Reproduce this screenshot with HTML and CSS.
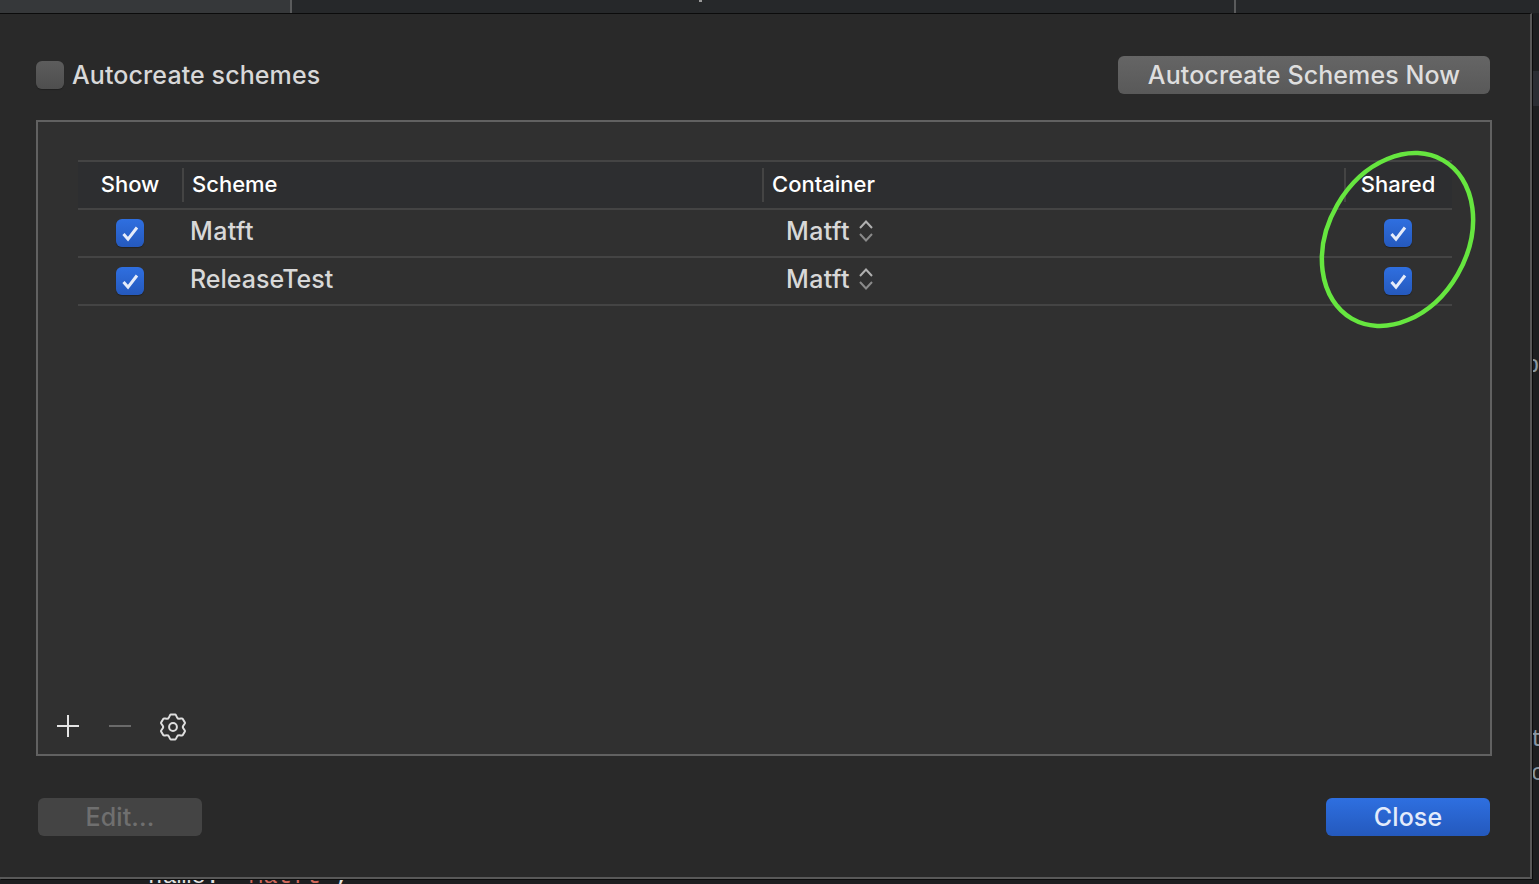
FILE: index.html
```html
<!DOCTYPE html>
<html lang="en">
<head>
<meta charset="utf-8">
<title>Manage Schemes</title>
<link rel="stylesheet" href="styles.css">
</head>
<body>
<div class="backdrop">
  <div class="tabs">
    <div class="tab tab-first"></div>
    <div class="tab tab-mid"><span class="tab-dot"></span></div>
    <div class="tab tab-last"></div>
  </div>
  <div class="side-strip"></div>
  <span class="edge-glyph edge-p">p</span>
  <span class="edge-glyph edge-t">t</span>
  <span class="edge-glyph edge-c">c</span>
  <div class="code-peek">name: <span class="code-str">"Matft"</span>,</div>
  <main class="sheet">
    <header class="top-row">
      <label class="auto-check"><span class="check check-off"></span><span>Autocreate schemes</span></label>
      <button class="btn btn-gray">Autocreate Schemes Now</button>
    </header>
    <section class="panel">
      <div class="table">
        <div class="row row-head">
          <div class="cell c-show">Show</div>
          <div class="cell c-scheme"><span class="sep"></span>Scheme</div>
          <div class="cell c-container"><span class="sep"></span>Container</div>
          <div class="cell c-shared"><span class="sep"></span>Shared</div>
        </div>
        <div class="row">
          <div class="cell c-show"><span class="check check-on"><svg viewBox="0 0 28 28" class="tick"><path d="M7.5 15l4.5 5.2L21 8.5"/></svg></span></div>
          <div class="cell c-scheme body-text wide">Matft</div>
          <div class="cell c-container body-text pop wide">Matft<svg class="updown" viewBox="0 0 16 24"><path d="M2 9l6-6.5 6 6.5"/><path class="down" d="M2 15l6 6.5 6-6.5"/></svg></div>
          <div class="cell c-shared"><span class="check check-on"><svg viewBox="0 0 28 28" class="tick"><path d="M7.5 15l4.5 5.2L21 8.5"/></svg></span></div>
        </div>
        <div class="row">
          <div class="cell c-show"><span class="check check-on"><svg viewBox="0 0 28 28" class="tick"><path d="M7.5 15l4.5 5.2L21 8.5"/></svg></span></div>
          <div class="cell c-scheme body-text">ReleaseTest</div>
          <div class="cell c-container body-text pop wide">Matft<svg class="updown" viewBox="0 0 16 24"><path d="M2 9l6-6.5 6 6.5"/><path class="down" d="M2 15l6 6.5 6-6.5"/></svg></div>
          <div class="cell c-shared"><span class="check check-on"><svg viewBox="0 0 28 28" class="tick"><path d="M7.5 15l4.5 5.2L21 8.5"/></svg></span></div>
        </div>
      </div>
      <div class="toolbar">
        <svg class="tool" viewBox="0 0 24 24"><path class="plus" d="M12 1v22M1 12h22"/></svg>
        <svg class="tool" viewBox="0 0 24 24"><path class="minus" d="M1 12h22"/></svg>
        <svg class="tool gear" viewBox="0 0 28 28">
          <circle cx="14" cy="14" r="3.9"/>
          <path d="M9.1 5.5C10.5 4.7 10.8 1.5 11.6 1.5h4.8c.8 0 1.1 3.2 2.5 4"/>
          <path transform="rotate(60 14 14)" d="M9.1 5.5C10.5 4.7 10.8 1.5 11.6 1.5h4.8c.8 0 1.1 3.2 2.5 4"/>
          <path transform="rotate(120 14 14)" d="M9.1 5.5C10.5 4.7 10.8 1.5 11.6 1.5h4.8c.8 0 1.1 3.2 2.5 4"/>
          <path transform="rotate(180 14 14)" d="M9.1 5.5C10.5 4.7 10.8 1.5 11.6 1.5h4.8c.8 0 1.1 3.2 2.5 4"/>
          <path transform="rotate(240 14 14)" d="M9.1 5.5C10.5 4.7 10.8 1.5 11.6 1.5h4.8c.8 0 1.1 3.2 2.5 4"/>
          <path transform="rotate(300 14 14)" d="M9.1 5.5C10.5 4.7 10.8 1.5 11.6 1.5h4.8c.8 0 1.1 3.2 2.5 4"/>
        </svg>
      </div>
      <svg class="ring" viewBox="0 0 160 182"><ellipse cx="80.5" cy="89.5" rx="69.5" ry="91.4" transform="rotate(30 80.5 89.5)"/></svg>
    </section>
    <footer class="bottom-row">
      <button class="btn btn-disabled">Edit...</button>
      <button class="btn btn-blue">Close</button>
    </footer>
  </main>
</div>
</body>
</html>
```
FILE: styles.css
```css
* { box-sizing: border-box; }
html, body { margin: 0; height: 100%; }
body {
  background: #1d1e20;
  font-family: Inter, "Liberation Sans", sans-serif;
  overflow: hidden;
}
.backdrop { position: relative; width: 1539px; height: 884px; overflow: hidden; }
.tabs { display: flex; height: 13px; background: #292b2c; }
.tab { height: 13px; }
.tab-first { width: 292px; background: #36383a; border-right: 2px solid #5a5b5c; }
.tab-mid { width: 944px; background: #26282a; border-right: 2px solid #5a5b5c; position: relative; }
.tab-last { flex: 1; background: #26282a; }
.tab-dot { position: absolute; left: 407px; top: 0; width: 3px; height: 2px; background: #9a9a9a; }
.side-strip { position: absolute; left: 1533px; top: 71px; width: 6px; height: 35px; background: #2b2d33; }
.edge-glyph { position: absolute; color: #8b98a3; font-family: "Liberation Mono", monospace; font-size: 24px; line-height: 24px; }
.edge-p { top: 354px; left: 1525px; }
.edge-t { top: 728px; left: 1530px; }
.edge-c { top: 762px; left: 1531px; }
.code-peek { position: absolute; left: 148px; top: 865px; font-family: "Liberation Mono", monospace; font-size: 24px; line-height: 24px; color: #e2e2e2; white-space: pre; }
.code-str { color: #d0685c; }
.sheet {
  position: absolute;
  left: 0; top: 13px;
  width: 1532px; height: 866px;
  background: #292929;
  border-top: 1px solid #0b0b0b;
  border-right: 2px solid #585858;
  border-bottom: 2px solid #585858;
  box-shadow: 1px 1px 0 #0c0c0c;
  padding: 42px 40px 40px 36px;
  display: flex;
  flex-direction: column;
}
.top-row { display: flex; justify-content: space-between; align-items: center; height: 38px; }
.auto-check { display: flex; align-items: center; gap: 8px; font-size: 25px; font-weight: 500; letter-spacing: .1px; color: #d8d8d8; }
.check { display: inline-flex; width: 28px; height: 28px; border-radius: 6px; flex: none; }
.check-off { background: linear-gradient(#5c5c5c, #4e4e4e); box-shadow: 0 1px 1px rgba(0,0,0,.25); }
.check-on { background: linear-gradient(#2f6fe0, #2559bd); box-shadow: 0 1px 1px rgba(0,0,0,.3); }
.tick { width: 28px; height: 28px; fill: none; stroke: #e6ecfa; stroke-width: 3; }
.btn { border: 0; border-radius: 6px; font-family: inherit; height: 38px; font-size: 25px; font-weight: 500; letter-spacing: .1px; padding: 0; }
.btn-gray { width: 372px; background: linear-gradient(#656565, #595959); color: #dedede; }
.btn-disabled { width: 164px; background: #444; color: #6f6f6f; }
.btn-blue { width: 164px; background: linear-gradient(#2e6fe0, #2459bd); color: #e3ebfb; }
.panel {
  position: relative;
  margin-top: 26px;
  width: 1456px;
  height: 636px;
  background: #303030;
  border: 2px solid #616161;
  padding: 38px 38px 0 40px;
  display: flex;
  flex-direction: column;
}
.table { border-top: 2px solid #444; }
.row { display: flex; height: 48px; border-bottom: 2px solid #444; align-items: center; }
.row-head { background: #2d2e30; color: #fff; font-size: 22px; font-weight: 500; height: 48px; }
.row-head .cell { padding-bottom: 2px; }
.cell { position: relative; height: 100%; display: flex; align-items: center; }
.c-show { width: 104px; justify-content: center; }
.c-scheme { width: 580px; padding-left: 10px; }
.c-container { width: 582px; padding-left: 10px; }
.c-shared { flex: 1; justify-content: center; }
.sep { position: absolute; left: 0; top: 6px; width: 2px; height: 34px; background: #444; }
.body-text { color: #d8d8d8; font-size: 25px; font-weight: 500; }
.wide { letter-spacing: .4px; }
.row:not(.row-head) .c-scheme { padding-left: 8px; }
.row:not(.row-head) .cell { padding-bottom: 5px; }
.row:not(.row-head) .check { margin-top: 5px; }
.pop { padding-left: 24px !important; gap: 8px; }
.updown { width: 16px; height: 24px; fill: none; stroke: #b0b0b0; stroke-width: 2; }
.updown .down { stroke: #8a8a8a; }
.toolbar { margin-top: auto; display: flex; align-items: center; height: 28px; margin-bottom: 14px; margin-left: -22px; }
.tool { fill: none; stroke: #e4e4e4; }
.tool:nth-child(1) { width: 24px; height: 24px; margin-right: 28px; }
.tool:nth-child(2) { width: 24px; height: 24px; margin-right: 27px; }
.plus { stroke-width: 2; }
.minus { stroke: #6a6a6a; stroke-width: 2; }
.tool.gear { width: 28px; height: 28px; margin-top: 2px; stroke: #dedede; stroke-width: 2; stroke-linejoin: round; stroke-linecap: round; }
.ring { position: absolute; left: 1279px; top: 28px; width: 160px; height: 182px; overflow: visible; }
.ring ellipse { fill: none; stroke: #66e63f; stroke-width: 4.5; }
.bottom-row { margin-top: 42px; padding-left: 2px; display: flex; justify-content: space-between; width: 1454px; }
```
